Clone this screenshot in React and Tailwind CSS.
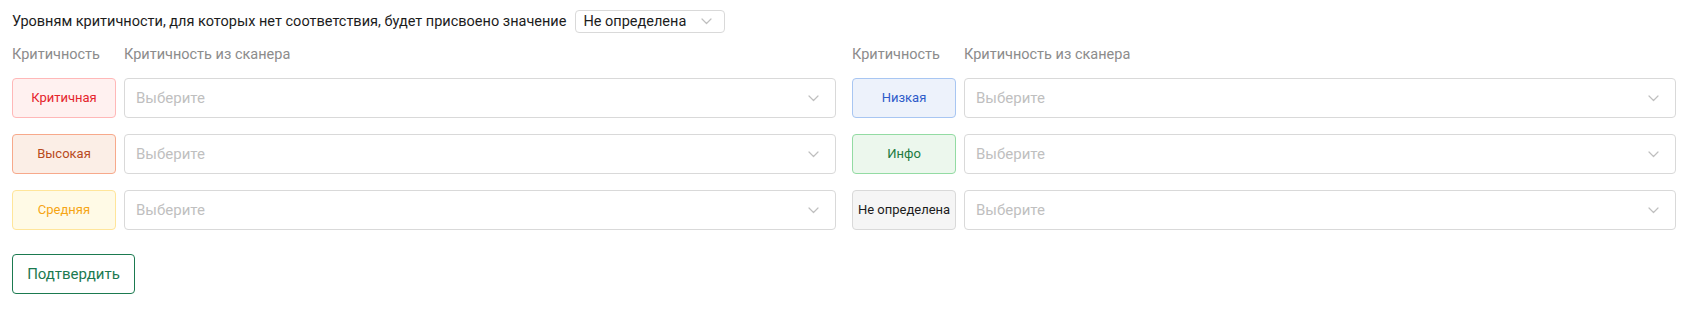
import React from "react";

const Chevron = ({ className = "" }) => (
  <svg width="11" height="7" viewBox="0 0 11 7" fill="none" className={className}>
    <path d="M1 1l4.5 4.5L10 1" stroke="#bfbfbf" strokeWidth="1.2" strokeLinecap="round" strokeLinejoin="round" />
  </svg>
);

const left = [
  { label: "Критичная", cls: "border-[#ffb8b8] bg-[#fff1f0] text-[#e5242c]" },
  { label: "Высокая", cls: "border-[#f7a98b] bg-[#fbeee6] text-[#b84a20]" },
  { label: "Средняя", cls: "border-[#ffe59a] bg-[#fffae6] text-[#f6a514]" },
];
const right = [
  { label: "Низкая", cls: "border-[#a8c6f2] bg-[#edf2fb] text-[#2d5bc9]" },
  { label: "Инфо", cls: "border-[#93dba3] bg-[#ecf7ed] text-[#217a3f]" },
  { label: "Не определена", cls: "border-[#d9d9d9] bg-[#f5f5f5] text-[#1c1c1c]" },
];

function Column({ items }) {
  return (
    <div className="flex flex-col">
      <div className="flex h-[18px] items-center gap-2 text-[14.5px] text-[#8c8c8c]">
        <div className="w-[104px]">Критичность</div>
        <div>Критичность из сканера</div>
      </div>
      <div className="mt-[14px] flex flex-col gap-4">
        {items.map((it) => (
          <div key={it.label} className="flex h-10 gap-2">
            <div
              className={`flex w-[104px] shrink-0 items-center justify-center whitespace-nowrap rounded-[4px] border text-[13px] ${it.cls}`}
            >
              {it.label}
            </div>
            <div className="flex flex-1 items-center justify-between rounded-[4px] border border-[#d9d9d9] bg-white pl-[11px] pr-[16px]">
              <span className="text-[15px] text-[#bfbfbf]">Выберите</span>
              <Chevron />
            </div>
          </div>
        ))}
      </div>
    </div>
  );
}

export default function App() {
  return (
    <div
      className="bg-white pl-[12px] pr-[8px] pt-[10px] pb-[20px] text-[#1c1c1c]"
      style={{ fontFamily: "Roboto, 'Noto Sans', sans-serif" }}
    >
      <div className="flex h-[23px] items-center gap-[9px]">
        <span className="text-[14.5px]">
          Уровням критичности, для которых нет соответствия, будет присвоено значение
        </span>
        <div className="flex h-[23px] w-[150px] items-center justify-between rounded-[4px] border border-[#d9d9d9] pl-[7px] pr-[12px]">
          <span className="text-[14.5px]">Не определена</span>
          <Chevron />
        </div>
      </div>
      <div className="mt-[13px] grid grid-cols-2 gap-x-4">
        <Column items={left} />
        <Column items={right} />
      </div>
      <button className="mt-6 flex h-10 w-[123px] items-center justify-center rounded-[4px] border border-[#1b7a50] text-[15px] text-[#1b7a50]">
        Подтвердить
      </button>
    </div>
  );
}
